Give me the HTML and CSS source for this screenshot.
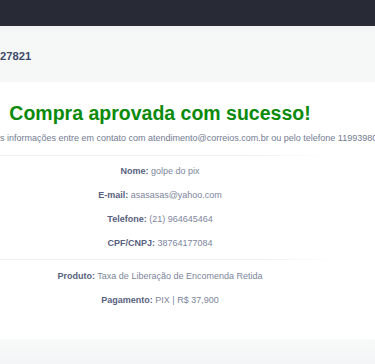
FILE: index.html
```html
<!DOCTYPE html>
<html>
	<head>
		<meta charset='utf-8' />
		<title>Compra aprovada</title>
		<link rel="stylesheet" href="styles.css">
	</head>
	<body>

		<div class="topbar"></div>

		<div class="page-head">
			<span class="order-number">27821</span>
		</div>

		<div class="card">
			<div class="content">
				<h1 class="title">Compra aprovada com sucesso!</h1>
				<p class="info">Para mais informações entre em contato com atendimento@correios.com.br ou pelo telefone 11993980000</p>
				<hr class="divider" />
				<p class="field"><b>Nome:</b> golpe do pix</p>
				<p class="field"><b>E-mail:</b> asasasas@yahoo.com</p>
				<p class="field"><b>Telefone:</b> (21) 964645464</p>
				<p class="field"><b>CPF/CNPJ:</b> 38764177084</p>
				<hr class="divider divider-wide" />
				<p class="field"><b>Produto:</b> Taxa de Liberação de Encomenda Retida</p>
				<p class="field"><b>Pagamento:</b> PIX | R$ 37,900</p>
			</div>
		</div>

		<div class="page-foot"></div>

	</body>
</html>
```

FILE: styles.css
```css
body{
	margin:0;
	background-color:#f4f5f6;
	font-family:"Liberation Sans", Arial, sans-serif;
	overflow:hidden;
}
.topbar{
	height:26px;
	background-color:#282b36;
}
.page-head{
	height:56px;
	padding-top:3px;
	box-sizing:border-box;
	display:flex;
	align-items:center;
	background:linear-gradient(#f1f3f3, #f6f7f7 8px, #f6f7f7);
}
.order-number{
	font-size:11.2px;
	font-weight:bold;
	color:#3f4a69;
}
.card{
	background-color:#fff;
	padding:19px 0 27px;
}
.content{
	width:392px;
	margin-left:-36px;
	display:flex;
	flex-direction:column;
	align-items:center;
}
.title{
	margin:0;
	font-size:19.5px;
	line-height:24px;
	font-weight:bold;
	color:#0b8a0b;
	white-space:nowrap;
}
.info{
	align-self:flex-start;
	margin:7px 0 0;
	font-size:9px;
	line-height:12px;
	color:#737b90;
	white-space:nowrap;
}
.divider{
	align-self:stretch;
	height:1px;
	margin:11px 0 3px;
	border:0;
	background:linear-gradient(90deg, #eceef1, #eceef1 72%, rgba(236,238,241,0) 92%);
}
.divider-wide{
	margin:4px 0 4px;
	background:linear-gradient(90deg, #eceef1, #eceef1 75%, rgba(236,238,241,0) 95%);
}
.field{
	margin:0;
	font-size:9px;
	line-height:24px;
	color:#7d859b;
	white-space:nowrap;
}
.field b{
	color:#58617e;
}
.page-foot{
	height:30px;
	background:linear-gradient(#f8f9f9, #f3f4f5);
}
```
